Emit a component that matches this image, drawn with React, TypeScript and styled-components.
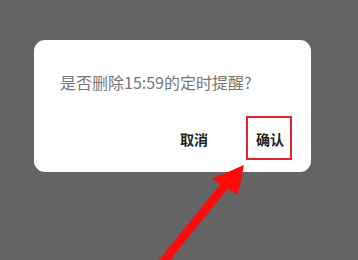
import React from 'react';
import styled, { createGlobalStyle } from 'styled-components';

const Colors = {
    backdrop: '#646464',
    card: '#ffffff',
    message: '#767676',
    action: '#222222',
    highlight: '#e0262b',
    arrow: '#ff0a0a',
};

const GlobalStyle = createGlobalStyle`
    html, body {
        margin: 0;
        padding: 0;
        background: ${Colors.backdrop};
    }
    body {
        width: 358px;
        height: 260px;
        overflow: hidden;
        font-family: 'Noto Sans CJK SC', 'Noto Sans', sans-serif;
    }
`;

function App() {
    return (
        <Screen>
            <GlobalStyle />
            <Dialog>
                <Message>是否删除15:59的定时提醒?</Message>
                <Actions>
                    <ActionButton>取消</ActionButton>
                    <ActionButton $marked>确认</ActionButton>
                </Actions>
            </Dialog>
            <Pointer />
        </Screen>
    );
}

function Pointer() {
    return (
        <ArrowLayer width="358" height="260" viewBox="0 0 358 260">
            <line x1="158" y1="268" x2="226" y2="184" stroke={Colors.arrow} strokeWidth="8.5" />
            <polygon points="244,165 212,179 238,195" fill={Colors.arrow} />
        </ArrowLayer>
    );
}

const Screen = styled.div`
    position: relative;
    width: 358px;
    height: 260px;
    padding: 40px 47px 0 34px;
    box-sizing: border-box;
`;

const Dialog = styled.div`
    display: flex;
    flex-direction: column;
    width: 277px;
    height: 132px;
    box-sizing: border-box;
    background: ${Colors.card};
    border-radius: 11px;
    padding: 30px 19px 0 26px;
`;

const Message = styled.div`
    font-size: 16px;
    line-height: 24px;
    color: ${Colors.message};
    white-space: nowrap;
`;

const Actions = styled.div`
    display: flex;
    justify-content: flex-end;
    align-items: center;
    gap: 30px;
    margin-top: 22px;
`;

const ActionButton = styled.div<{ $marked?: boolean }>`
    display: flex;
    align-items: center;
    justify-content: center;
    height: 44px;
    box-sizing: border-box;
    padding: 2px 6px 0 8px;
    font-size: 14px;
    font-weight: 700;
    color: ${Colors.action};
    border: 2px solid ${(p) => (p.$marked ? Colors.highlight : 'transparent')};
`;

const ArrowLayer = styled.svg`
    position: absolute;
    left: 0;
    top: 0;
    pointer-events: none;
`;

export default App;
